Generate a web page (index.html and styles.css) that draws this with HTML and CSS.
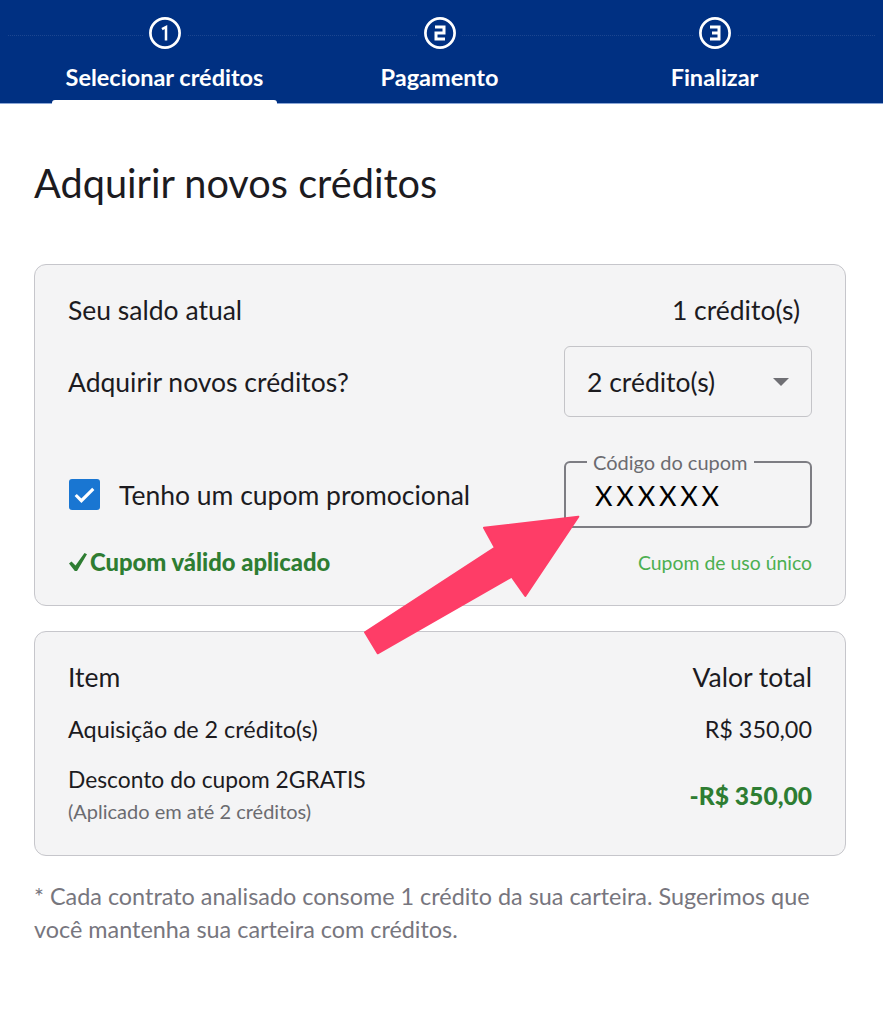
FILE: index.html
```html
<!DOCTYPE html>
<html>
<head>
    <title>Adquirir novos créditos</title>
    <link rel="stylesheet" href="styles.css">
</head>
<body>
    <div class="stepper">
        <div class="step active">
            <svg class="step-icon" viewBox="0 0 32 32"><circle cx="16" cy="16" r="14.6" fill="none" stroke="#fff" stroke-width="2.7"/><path d="M13 12.2l4-2.2v13.5" fill="none" stroke="#fff" stroke-width="2.5"/></svg>
            <span class="step-label">Selecionar créditos</span>
        </div>
        <div class="step">
            <svg class="step-icon" viewBox="0 0 32 32"><circle cx="16" cy="16" r="14.6" fill="none" stroke="#fff" stroke-width="2.7"/><path d="M11 10h9v6h-8v6h9" fill="none" stroke="#fff" stroke-width="3"/></svg>
            <span class="step-label">Pagamento</span>
        </div>
        <div class="step">
            <svg class="step-icon" viewBox="0 0 32 32"><circle cx="16" cy="16" r="14.6" fill="none" stroke="#fff" stroke-width="2.7"/><path d="M11 10h9v12h-9M13 16h7" fill="none" stroke="#fff" stroke-width="3"/></svg>
            <span class="step-label">Finalizar</span>
        </div>
    </div>

    <div class="content">
        <h1>Adquirir novos créditos</h1>

        <div class="card card-balance">
            <div class="row row-balance">
                <span>Seu saldo atual</span>
                <span>1 crédito(s)</span>
            </div>
            <div class="row row-select">
                <span>Adquirir novos créditos?</span>
                <div class="select">
                    <span>2 crédito(s)</span>
                    <span class="select-arrow"></span>
                </div>
            </div>
            <div class="row row-coupon">
                <label class="check">
                    <span class="checkbox">
                        <svg viewBox="0 0 30 30"><path d="M6.5 15.5l5.5 5.5L23.5 9.5" fill="none" stroke="#fff" stroke-width="3"/></svg>
                    </span>
                    Tenho um cupom promocional
                </label>
                <fieldset class="coupon-field">
                    <legend>Código do cupom</legend>
                    <span class="coupon-value">XXXXXX</span>
                </fieldset>
            </div>
            <div class="row row-status">
                <span class="status-ok">
                    <svg class="tick" viewBox="0 0 18 18"><path d="M0 10.5L2.5 8.5L6.5 12.5L15.5 0L18 1.2L8 18H5.8Z" fill="#2e7d32"/></svg>
                    Cupom válido aplicado
                </span>
                <span class="status-note">Cupom de uso único</span>
            </div>
        </div>

        <div class="card card-summary">
            <div class="row row-head">
                <span>Item</span>
                <span>Valor total</span>
            </div>
            <div class="row row-item">
                <span>Aquisição de 2 crédito(s)</span>
                <span>R$ 350,00</span>
            </div>
            <div class="row row-discount">
                <div>
                    <div>Desconto do cupom 2GRATIS</div>
                    <div class="small">(Aplicado em até 2 créditos)</div>
                </div>
                <span class="discount">-R$ 350,00</span>
            </div>
        </div>

        <p class="note">* Cada contrato analisado consome 1 crédito da sua carteira. Sugerimos que você mantenha sua carteira com créditos.</p>
    </div>

    <svg class="arrow" width="883" height="1024" viewBox="0 0 883 1024">
        <path d="M578.3 516.7L484 527.7L495 547.7L365 632.3L377.7 653.3L511.7 576.7L525.3 596Z" fill="#fe3d67" stroke="#fe3d67" stroke-width="2" stroke-linejoin="round"/>
    </svg>
</body>
</html>
```

FILE: styles.css
```css
* {
    box-sizing: border-box;
}

body {
    margin: 0;
    background: #fff;
    color: #1c1b1f;
    font-family: Lato, "Noto Sans", sans-serif;
    font-size: 26.5px;
}

.stepper {
    position: relative;
    display: grid;
    grid-template-columns: repeat(3, 225px);
    gap: 50px;
    height: 104px;
    padding: 0 56px 0 52px;
    background: #003082;
    border-bottom: 1px solid #8ba6d6;
}

.stepper::before {
    content: "";
    position: absolute;
    top: 35px;
    left: 8px;
    right: 8px;
    border-top: 1px dotted #1c4690;
}

.step {
    position: relative;
    display: flex;
    flex-direction: column;
    align-items: center;
    height: 104px;
    padding-top: 17px;
}

.step.active::after {
    content: "";
    position: absolute;
    left: 0;
    right: 0;
    bottom: 0;
    height: 4px;
    background: #fff;
    border-radius: 3px 3px 0 0;
}

.step-icon {
    width: 32px;
    height: 32px;
    background: #003082;
    box-shadow: 0 0 0 6px #003082;
}

.step-label {
    margin-top: 13px;
    color: #fff;
    font-size: 23.5px;
    font-weight: 700;
    line-height: 30px;
}

.content {
    padding: 0 37px 0 34px;
}

h1 {
    margin: 53px 0 55px;
    font-size: 39.7px;
    font-weight: 400;
    line-height: 52px;
}

.card {
    background: #f4f4f5;
    border: 1px solid #c6c6cb;
    border-radius: 12px;
    padding: 0 33px;
}

.row {
    display: flex;
    justify-content: space-between;
    align-items: center;
}

.card-balance {
    height: 342px;
    padding-top: 30px;
}

.row-balance {
    height: 30px;
    padding-right: 12px;
}

.row-select {
    margin-top: 21px;
}

.select {
    display: flex;
    justify-content: space-between;
    align-items: center;
    width: 248px;
    height: 71px;
    padding: 0 22px;
    border: 1px solid #c4c4c8;
    border-radius: 6px;
}

.select-arrow {
    border-left: 8px solid transparent;
    border-right: 8px solid transparent;
    border-top: 8px solid #6f6f74;
}

.row-coupon {
    margin-top: 34px;
}

.check {
    display: flex;
    align-items: center;
    gap: 19px;
    padding-top: 10px;
    padding-left: 1px;
}

.checkbox {
    width: 31px;
    height: 31px;
    background: #1976d2;
    border-radius: 3px;
}

.checkbox svg {
    display: block;
}

.coupon-field {
    width: 248px;
    height: 77px;
    margin: 0;
    padding: 0 22px 0 29px;
    border: 2px solid #7d7d83;
    border-radius: 6px;
}

.coupon-field legend {
    margin-left: -8px;
    padding: 0 6px;
    color: #6b6b70;
    font-size: 20px;
    line-height: 22px;
}

.coupon-value {
    display: block;
    margin-top: 5px;
    color: #000;
    font-size: 27px;
    letter-spacing: 3.8px;
    line-height: 36px;
}

.row-status {
    margin-top: 20px;
}

.status-ok {
    display: flex;
    align-items: center;
    gap: 3px;
    color: #2e7d32;
    font-size: 23.8px;
    font-weight: 900;
}

.tick {
    width: 18px;
    height: 18px;
    margin-left: 1px;
}

.status-note {
    color: #4caf50;
    font-size: 19.4px;
}

.card-summary {
    height: 225px;
    margin-top: 25px;
    padding-top: 30px;
}

.row-head {
    height: 30px;
}

.row-item {
    margin-top: 22px;
    height: 30px;
    font-size: 23.4px;
}

.row-discount {
    margin-top: 20px;
    font-size: 22.8px;
    line-height: 30px;
}

.small {
    color: #6b6b70;
    font-size: 20px;
    line-height: 35px;
}

.discount {
    padding-bottom: 2px;
    color: #2e7d32;
    font-size: 24.6px;
    font-weight: 900;
}

.note {
    margin: 24px 0 0;
    padding-right: 10px;
    color: #77767e;
    font-size: 23.4px;
    line-height: 33px;
}

.arrow {
    position: absolute;
    top: 0;
    left: 0;
    pointer-events: none;
}
```
